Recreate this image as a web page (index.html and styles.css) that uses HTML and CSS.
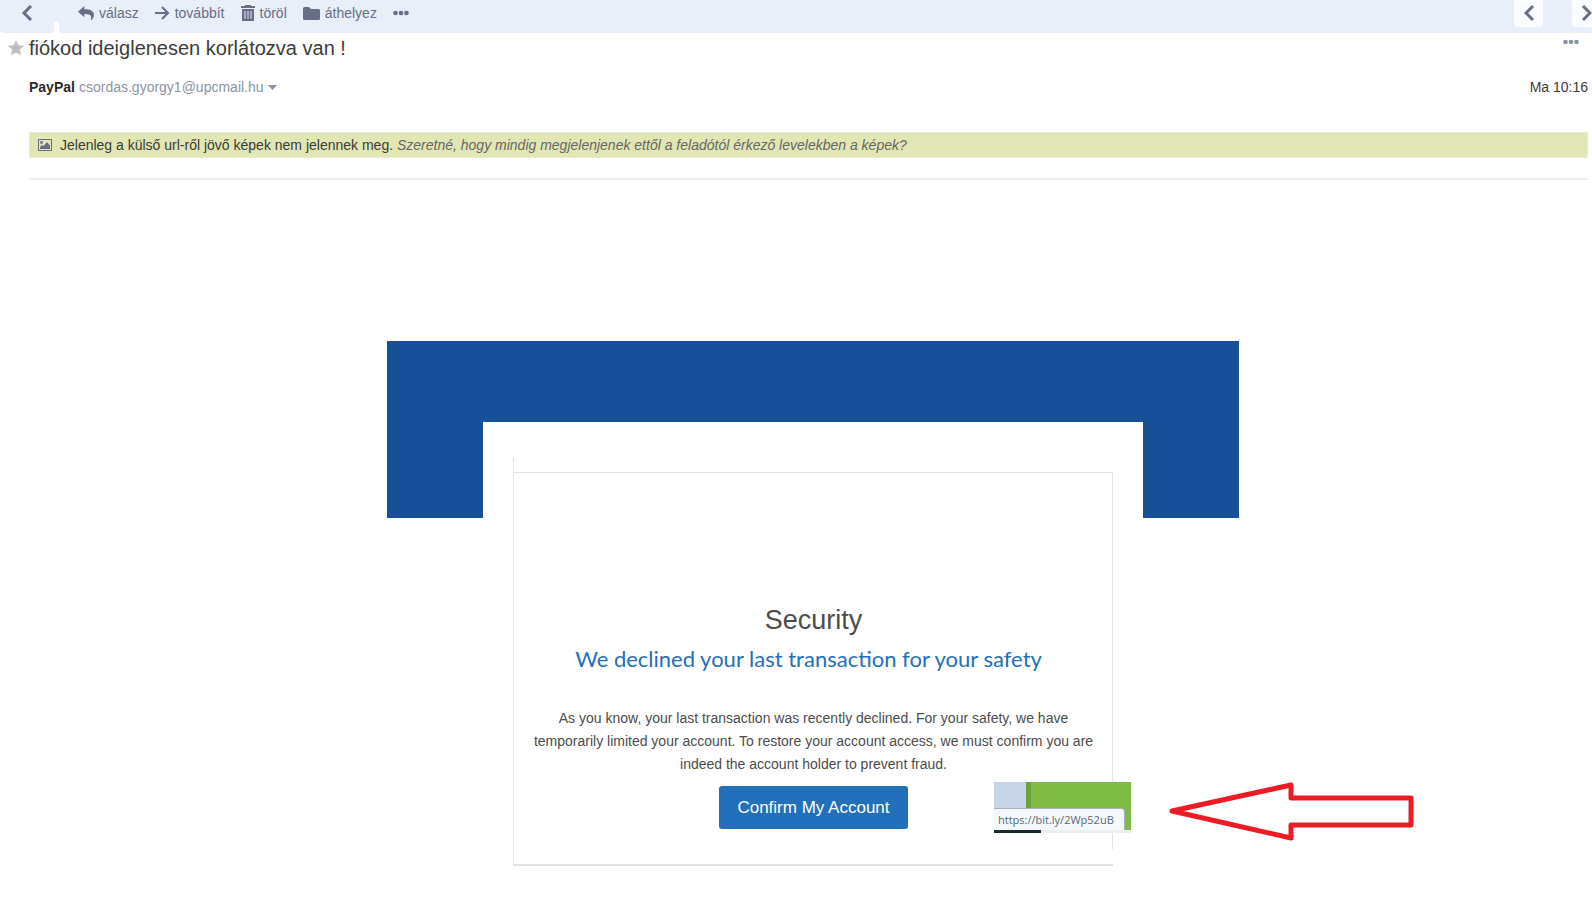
FILE: index.html
```html
<!DOCTYPE html>
<html lang="hu">
<head>
<meta charset="utf-8">
<title>fiókod ideiglenesen korlátozva van !</title>
<link rel="stylesheet" href="styles.css">
</head>
<body>
<header class="topbar">
  <div class="pane pane-back">
    <button class="tool" aria-label="Vissza"><svg width="12" height="18" viewBox="0 0 12 18"><path class="chev" d="M10 2 3 9l7 7"/></svg></button>
  </div>
  <div class="pane pane-tools">
    <button class="tool"><svg width="16" height="14" viewBox="0 0 16 14"><path d="M6.300 0v3.300c5.500 0 9.700 1.200 9.700 5.700 0 2-1.200 3.900-2.600 4.900-.3.200-.8-.1-.6-.5C14 9.500 12.200 8 6.300 8v3.300L0 5.700z"/></svg>válasz</button>
    <button class="tool"><svg width="15" height="14" viewBox="0 0 15 14"><path class="line" d="M0 7h13M7 1l6 6-6 6"/></svg>továbbít</button>
    <button class="tool"><svg width="14" height="16" viewBox="0 0 14 16"><path fill-rule="evenodd" d="M4 0h6v1h4v2H0V1h4zM1 4h12v12H1zM3.500 6v8h1V6zM6.500 6v8h1V6zM9.500 6v8h1V6z"/></svg>töröl</button>
    <button class="tool"><svg width="17" height="13" viewBox="0 0 17 13"><path d="M1.500 0H6l2 2h7.500Q17 2 17 3.500v8q0 1.500-1.500 1.500h-14Q0 13 0 11.500v-10Q0 0 1.500 0z"/></svg>áthelyez</button>
    <button class="tool" aria-label="Továbbiak"><svg width="16" height="6" viewBox="0 0 16 6"><circle cx="2.500" cy="3" r="2.300"/><circle cx="8" cy="3" r="2.300"/><circle cx="13.500" cy="3" r="2.300"/></svg></button>
    <div class="pager">
      <button class="page" aria-label="Előző"><svg width="12" height="18" viewBox="0 0 12 18"><path class="chev" d="M10 2 3 9l7 7"/></svg></button>
      <button class="page" aria-label="Következő"><svg width="12" height="18" viewBox="0 0 12 18"><path class="chev" d="m2 2 7 7-7 7"/></svg></button>
    </div>
  </div>
</header>
<main>
  <div class="subject">
    <button class="star" aria-label="Csillag"><svg width="16" height="16" viewBox="0 0 16 16"><path d="m8 0 2.300 5.200 5.700.6-4.200 3.800 1.200 5.700L8 12.400l-5 2.900 1.200-5.700L0 5.800l5.700-.6z"/></svg></button>
    <h1>fiókod ideiglenesen korlátozva van !</h1>
    <button class="more" aria-label="Műveletek"><svg width="16" height="6" viewBox="0 0 16 6"><circle cx="2.500" cy="3" r="2.300"/><circle cx="8" cy="3" r="2.300"/><circle cx="13.500" cy="3" r="2.300"/></svg></button>
  </div>
  <div class="sender">
    <strong>PayPal</strong>
    <button class="address">csordas.gyorgy1@upcmail.hu<svg width="9" height="5" viewBox="0 0 9 5"><path d="M0 0h9L4.500 5z"/></svg></button>
    <time>Ma 10:16</time>
  </div>
  <div class="notice">
    <svg width="14" height="12" viewBox="0 0 14 12"><path fill-rule="evenodd" d="M0 0h14v12H0zM1 1v10h12V1z"/><circle cx="3.500" cy="3.500" r="1.400"/><path d="M2 10V8l2-2 1.500 1L9 3l3 3.500V10z"/></svg>
    <p>Jelenleg a külső url-ről jövő képek nem jelennek meg. <a href="#">Szeretné, hogy mindig megjelenjenek ettől a feladótól érkező levelekben a képek?</a></p>
  </div>
  <hr>
  <article class="letter">
    <div class="banner">
      <div class="sheet">
        <section class="card">
          <h2>Security</h2>
          <h3>We declined your last transaction for your safety</h3>
          <p>As you know, your last transaction was recently declined. For your safety, we have temporarily limited your account. To restore your account access, we must confirm you are indeed the account holder to prevent fraud.</p>
          <div class="action">
            <a class="confirm" href="#">Confirm My Account</a>
            <div class="snippet"><span class="status">https://bit.ly/2Wp52uB</span></div>
            <svg class="arrow" width="246" height="60" viewBox="0 0 246 60"><path d="M4 30 123 4v13h120v27H123v13z"/></svg>
          </div>
        </section>
      </div>
    </div>
  </article>
</main>
</body>
</html>
```
FILE: styles.css
```css
* { box-sizing: border-box; }
body { margin: 0; background: #fff; color: #3c3c3c; font: 14px/20px "Liberation Sans", Arial, sans-serif; overflow-x: hidden; }
h1, h2, h3, p { margin: 0; font-weight: 400; }
button { border: 0; padding: 0; background: none; font: inherit; color: inherit; }
svg { fill: currentColor; flex: none; }
.chev, .line { fill: none; stroke: currentColor; stroke-width: 3; }
.line { stroke-width: 2; }

.topbar { display: flex; gap: 5px; height: 33px; background: linear-gradient(#e8eff8 22px, #fff 22px); color: #686d88; }
.pane { display: flex; align-items: flex-start; background: #e8eff8; }
.pane-back { width: 54px; padding: 3px 21px; border-radius: 0 0 4px 4px; }
.pane-tools { flex: 1; gap: 16px; padding: 3px 0 0 19px; border-radius: 0 0 0 4px; }
.tool { display: flex; align-items: center; gap: 5px; height: 20px; }
.pager { display: flex; gap: 29px; margin: -3px -9px 0 auto; }
.page { display: flex; align-items: center; justify-content: center; width: 29px; height: 27px; padding-bottom: 2px; background: #fafcfe; border-radius: 0 0 4px 4px; }

.subject { display: flex; align-items: flex-start; padding: 3px 13px 0 8px; }
.star { display: flex; margin-top: 4px; color: #bdbdbd; }
h1 { margin-left: 5px; font-size: 20px; line-height: 24px; }
.more { display: flex; margin: 3px 0 0 auto; color: #8b93a3; }

.sender { display: flex; gap: 4px; margin-top: 17px; padding: 0 4px 0 29px; }
.sender strong { color: #2c2c2c; }
.address { display: flex; align-items: center; gap: 4px; color: #8c94a3; }
.sender time { margin-left: auto; }

.notice { display: flex; align-items: center; gap: 8px; height: 26px; margin: 35px 4px 0 29px; padding: 0 8px; background: #e1e6b2; border: 1px solid #e8e8e4; }
.notice svg { color: #686d88; }
.notice a { color: #666; font-style: italic; text-decoration: none; }
hr { height: 2px; margin: 20px 4px 0 29px; border: 0; background: #eee; }

.letter { padding: 161px 4px 0 38px; }
.banner { width: 852px; margin: 0 auto; padding: 81px 96px 0; background: linear-gradient(#184f99, #184f99) no-repeat 0 0 / 100% 177px; }
.sheet { padding: 36px 30px 0; background: #fff; }
.card { position: relative; padding: 146px 20px 35px; border-left: 1px solid #e2e2e2; border-bottom: 2px solid #e2e2e2; text-align: center; color: #4c4c4c; }
.card::before { content: ""; position: absolute; inset: 14px 0 15px 0; border: 1px solid #e2e2e2; border-width: 1px 1px 0 0; border-top-right-radius: 2px; }
h2 { font-size: 27px; line-height: 32px; }
h3 { margin: 7px 10px 0 0; font: 22px/32px Lato, sans-serif; color: #2270ba; white-space: nowrap; }
.card p { margin: 32px -1px 0; line-height: 23px; }
.action { position: relative; display: flex; justify-content: center; margin-top: 10px; }
.confirm { padding: 0 18px; border-radius: 3px; background: #2270ba; color: #fff; font-size: 17px; line-height: 43px; text-decoration: none; }
.snippet { position: absolute; left: 460px; top: -4px; width: 137px; height: 51px; padding-top: 26px; background: linear-gradient(#1b2b2b, #1b2b2b) no-repeat 0 100% / 47px 3px, linear-gradient(#eee, #eee) no-repeat 0 100% / 100% 3px, linear-gradient(90deg, #c6d5e8 32px, #69a335 32px 37px, #81bb47 37px); }
.status { display: block; width: 131px; height: 22px; padding-left: 4px; border: 1px solid #a9b2ba; border-width: 1px 1px 0 0; border-radius: 0 4px 0 0; background: #f4f8fd; color: #5d6875; font: 11px/21px "Open Sans", sans-serif; text-align: left; white-space: nowrap; }
.arrow { position: absolute; left: 634px; top: -5px; fill: none; stroke: #ed1c24; stroke-width: 5; stroke-linejoin: round; }
```
